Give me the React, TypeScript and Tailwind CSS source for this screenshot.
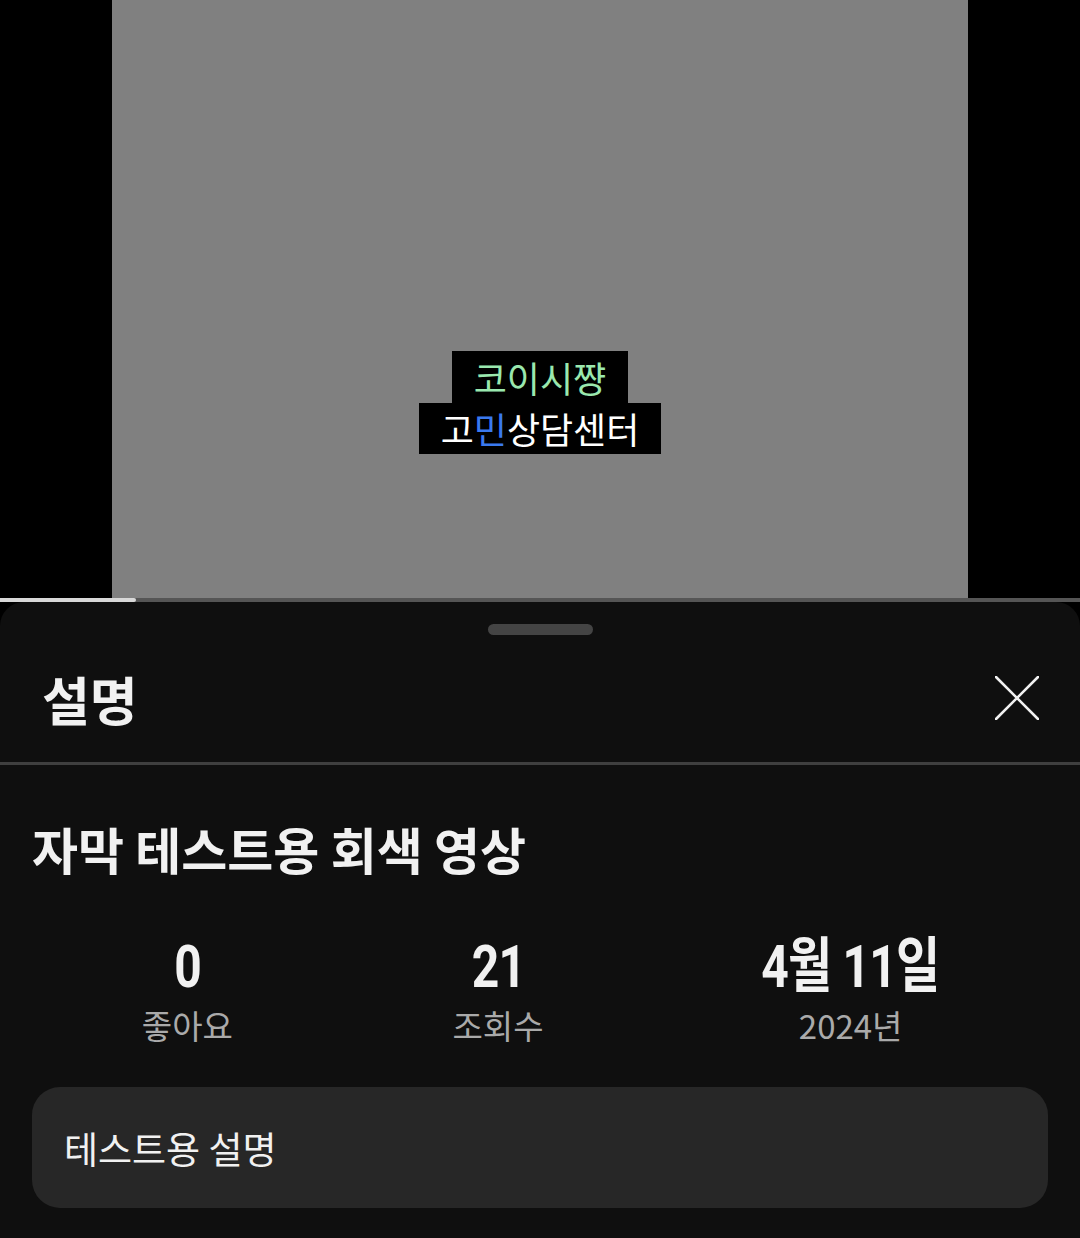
import React from "react";

const KR = { fontFamily: '"Noto Sans CJK KR", "Noto Sans", sans-serif' };
const NUM = { fontFamily: 'Roboto, "Noto Sans CJK KR", sans-serif' };

function Stat({ value, label, numW }: { value: string; label: string; numW: string }) {
  return (
    <div className="flex flex-col items-center">
      <div className={`h-[56px] flex items-center justify-center ${numW}`}>
        <span
          className="inline-block whitespace-nowrap text-[60px] leading-[56px] font-bold text-[#f1f1f1] scale-x-[0.8] tracking-[-1px]"
          style={NUM}
        >
          {value}
        </span>
      </div>
      <div className="mt-[10px] text-[33px] leading-[40px] text-[#aaaaaa] whitespace-nowrap" style={KR}>
        {label}
      </div>
    </div>
  );
}

export default function App() {
  return (
    <div className="w-[1080px] h-[1238px] bg-black overflow-hidden flex flex-col" style={KR}>
      {/* video */}
      <div className="h-[598px] flex justify-center">
        <div className="w-[856px] h-full bg-[#808080] flex flex-col items-center pt-[351px]">
          <div className="bg-black px-[22px] h-[52px] flex items-center text-[36px] leading-[52px] text-[#9ae8ae]">
            코이시쨩
          </div>
          <div className="bg-black px-[22px] h-[51px] flex items-center text-[36px] leading-[51px] text-white">
            고<span className="text-[#3a79ee]">민</span>상담센터
          </div>
        </div>
      </div>
      {/* progress */}
      <div className="h-[4px] bg-[#555555] relative">
        <div className="h-full w-[136px] bg-[#d8d8d8] rounded-r-full" />
      </div>
      {/* sheet */}
      <div className="flex-1 bg-[#0f0f0f] rounded-t-[24px] flex flex-col">
        <div className="pt-[22px] flex justify-center">
          <div className="w-[105px] h-[11px] rounded-full bg-[#444444]" />
        </div>
        <div className="h-[127px] flex items-center justify-between pl-[42px] pr-[41px]">
          <div className="text-[52px] font-bold text-[#f1f1f1] leading-[60px]">설명</div>
          <svg width="44" height="44" viewBox="0 0 44 44" className="mt-[-2px]">
            <path d="M1 1 L43 43 M43 1 L1 43" stroke="#f1f1f1" strokeWidth="2.6" strokeLinecap="round" />
          </svg>
        </div>
        <div className="h-[3px] bg-[#3f3f3f]" />
        <div className="mt-[53px] pl-[32px] text-[50px] leading-[60px] font-bold text-[#f1f1f1]">
          자막 테스트용 회색 영상
        </div>
        <div className="mt-[61px] px-[32px] flex justify-around">
          <Stat value="0" label="좋아요" numW="w-[30px]" />
          <Stat value="21" label="조회수" numW="w-[48px]" />
          <Stat value="4월 11일" label="2024년" numW="w-[175px]" />
        </div>
        <div className="mt-[42px] mx-[32px] h-[121px] rounded-[28px] bg-[#272727] flex items-center px-[32px]">
          <div className="text-[37px] leading-[44px] text-[#f1f1f1]">테스트용 설명</div>
        </div>
      </div>
    </div>
  );
}
